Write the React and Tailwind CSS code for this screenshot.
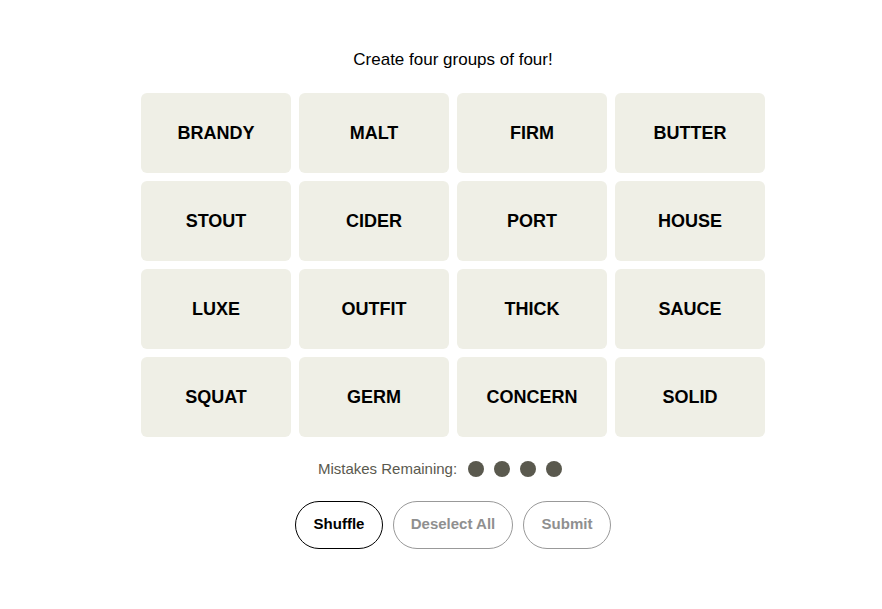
import React from 'react'

const words = [
  'BRANDY', 'MALT', 'FIRM', 'BUTTER',
  'STOUT', 'CIDER', 'PORT', 'HOUSE',
  'LUXE', 'OUTFIT', 'THICK', 'SAUCE',
  'SQUAT', 'GERM', 'CONCERN', 'SOLID',
]

const App = () => {
  return (
    <div
      className="min-h-screen bg-white flex flex-col items-center pt-[49px] pl-[24px]"
      style={{ fontFamily: '"Liberation Sans", Arial, sans-serif' }}
    >
      <p className="text-[17px] leading-[22px] text-black">Create four groups of four!</p>

      <div className="mt-[22px] grid grid-cols-4 gap-[8px] w-[624px]">
        {words.map((w) => (
          <button
            key={w}
            className="h-[80px] rounded-[6px] bg-[#efefe6] text-[18px] font-bold text-black flex items-center justify-center"
          >
            {w}
          </button>
        ))}
      </div>

      <div className="mt-[21px] mr-[26px] flex items-center text-[15px] text-[#5a594e]">
        <span className="mr-[11px]">Mistakes Remaining:</span>
        <div className="flex gap-[10px]">
          <span className="w-[16px] h-[16px] rounded-full bg-[#5a594e]" />
          <span className="w-[16px] h-[16px] rounded-full bg-[#5a594e]" />
          <span className="w-[16px] h-[16px] rounded-full bg-[#5a594e]" />
          <span className="w-[16px] h-[16px] rounded-full bg-[#5a594e]" />
        </div>
      </div>

      <div className="mt-[20px] flex gap-[10px]">
        <button className="w-[88px] h-[48px] rounded-full border border-black text-[15px] font-bold text-black">
          Shuffle
        </button>
        <button className="w-[120px] h-[48px] rounded-full border border-[#999999] text-[15px] font-bold text-[#8f8f8f]">
          Deselect All
        </button>
        <button className="w-[88px] h-[48px] rounded-full border border-[#999999] text-[15px] font-bold text-[#8f8f8f]">
          Submit
        </button>
      </div>
    </div>
  )
}

export default App
